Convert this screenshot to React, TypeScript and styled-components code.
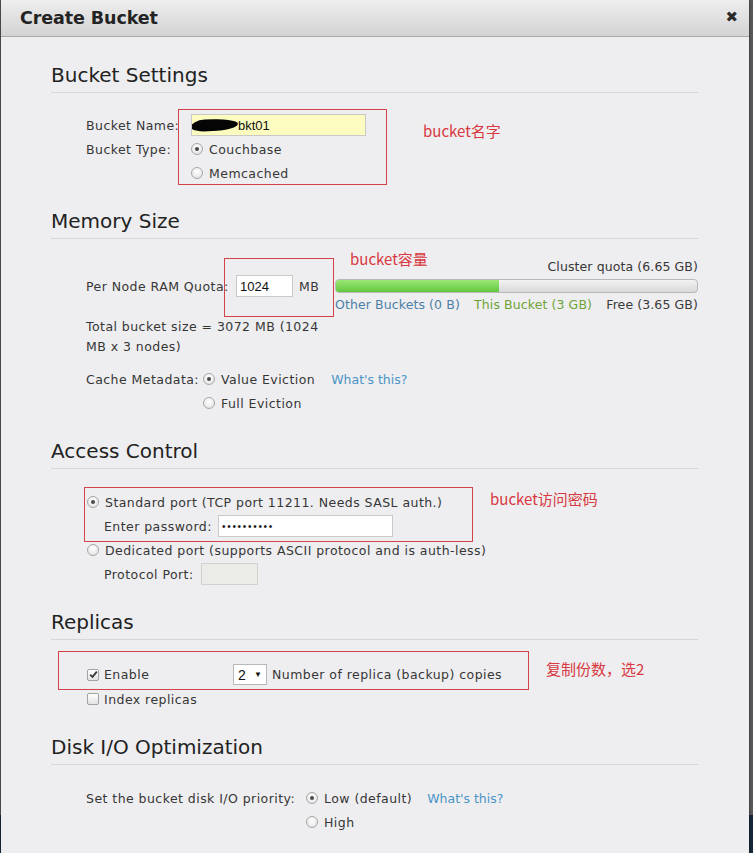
import React from "react";
import styled, { createGlobalStyle } from "styled-components";

const Global = createGlobalStyle`
  html, body { margin: 0; padding: 0; background: #565656; }
  body { font-family: "DejaVu Sans", Verdana, sans-serif; }
  * { box-sizing: border-box; }
`;

const Page = styled.div`
  width: 753px;
  height: 853px;
  overflow: hidden;
  display: flex;
  background: linear-gradient(to bottom, #5a5a5a 0, #5a5a5a 815px, #16293b 815px);
`;

const Dialog = styled.div`
  position: relative;
  margin-left: 1px;
  width: 748px;
  height: 853px;
  background: #eeeef0;
  box-shadow: 0 0 3px rgba(0, 0, 0, 0.5);
`;

const Header = styled.div`
  height: 37px;
  display: flex;
  align-items: center;
  justify-content: space-between;
  padding: 0 11px 1px 19px;
  background: linear-gradient(to bottom, #eeeeee, #d3d3d3);
  border-bottom: 1px solid #a9a9a9;
  border-radius: 4px 4px 0 0;
`;

const Title = styled.h1`
  margin: 0;
  font-family: "DejaVu Sans", Verdana, sans-serif;
  font-size: 17.5px;
  font-weight: bold;
  color: #242424;
  letter-spacing: -0.1px;
`;

const Close = styled.span`
  font-size: 15px;
  font-weight: bold;
  color: #2a2a2a;
  line-height: 1;
`;

const Body = styled.div`
  padding: 26px 51px 0 50px;
`;

const Section = styled.section`
  & + & {
    margin-top: 24px;
  }
`;

const Heading = styled.h2`
  margin: 0;
  font-size: 20px;
  font-weight: normal;
  line-height: 24px;
  color: #222;
  padding-bottom: 5px;
  border-bottom: 1px solid #d6d6d8;
`;

const Fields = styled.div<{ $top?: number }>`
  margin-top: ${(p) => (p.$top ?? 20)}px;
  padding-left: 35px;
  font-size: 12.5px;
  letter-spacing: 0.45px;
  color: #363636;
`;

const Row = styled.div<{ $indent?: number; $h?: number }>`
  display: flex;
  align-items: center;
  height: ${(p) => p.$h ?? 24}px;
  padding-left: ${(p) => p.$indent ?? 0}px;
  white-space: nowrap;
`;

const Label = styled.span<{ $w?: number }>`
  flex: none;
  width: ${(p) => (p.$w ? `${p.$w}px` : "auto")};
`;

const TextBox = styled.div<{ $w: number; $bg?: string; $disabled?: boolean }>`
  flex: none;
  width: ${(p) => p.$w}px;
  height: 22px;
  display: flex;
  align-items: center;
  padding-left: 3px;
  border: 1px solid ${(p) => (p.$disabled ? "#d2d2d0" : "#c9c9c9")};
  background: ${(p) => (p.$disabled ? "#ebebe7" : p.$bg ?? "#ffffff")};
  font-family: "Liberation Sans", Arial, sans-serif;
  font-size: 13px;
  letter-spacing: 0;
  color: #111;
  overflow: hidden;
`;

const Redaction = styled.span`
  display: inline-block;
  width: 47px;
  height: 12px;
  margin-left: -4px;
  background: #050505;
  border-radius: 30% 70% 55% 35% / 60% 50% 50% 40%;
  transform: rotate(-3deg);
`;

const Dots = styled.span`
  font-size: 10px;
  letter-spacing: 1.7px;
  color: #1a1a1a;
`;

const RadioDot = styled.span<{ $on?: boolean }>`
  flex: none;
  width: 12px;
  height: 12px;
  margin-right: 6px;
  border-radius: 50%;
  border: 1px solid #a7a7a7;
  background: radial-gradient(circle at 50% 35%, #ffffff 0, #dedede 100%);
  display: flex;
  align-items: center;
  justify-content: center;
  &::after {
    content: "";
    width: 4px;
    height: 4px;
    border-radius: 50%;
    background: ${(p) => (p.$on ? "#4a4a4a" : "transparent")};
  }
`;

const CheckBox = styled.span`
  flex: none;
  width: 12px;
  height: 12px;
  margin-right: 5px;
  border-radius: 2px;
  border: 1px solid #a2a2a2;
  background: linear-gradient(#ffffff, #e3e3e3);
  display: flex;
  align-items: center;
  justify-content: center;
`;

const Link = styled.span<{ $ml: number }>`
  margin-left: ${(p) => p.$ml}px;
  color: #4a94c7;
  letter-spacing: 0;
`;

const Unit = styled.span`
  margin-left: 6px;
`;

const MemoryRow = styled.div`
  display: flex;
  align-items: center;
`;

const MemoryLeft = styled.div`
  flex: none;
  width: 249px;
  display: flex;
  align-items: center;
`;

const Quota = styled.div`
  flex: 1;
  display: flex;
  flex-direction: column;
  letter-spacing: 0.1px;
`;

const QuotaTitle = styled.div`
  text-align: right;
  line-height: 16px;
`;

const Bar = styled.div`
  margin-top: 4px;
  height: 14px;
  border: 1px solid #b9b9b9;
  border-radius: 4px;
  background: linear-gradient(#f2f2f2, #d9d9d9);
  overflow: hidden;
  display: flex;
`;

const BarFill = styled.div`
  height: 100%;
  background: linear-gradient(#9be676, #62c83f);
`;

const Legend = styled.div`
  margin-top: 4px;
  display: flex;
  justify-content: space-between;
  line-height: 16px;
`;

const LegendItem = styled.span<{ $c: string }>`
  color: ${(p) => p.$c};
`;

const Para = styled.p`
  margin: 4px 0 0;
  width: 245px;
  line-height: 20px;
`;

const Select = styled.div`
  flex: none;
  width: 34px;
  height: 21px;
  margin-right: 5px;
  padding: 0 4px;
  display: flex;
  align-items: center;
  justify-content: space-between;
  background: #fff;
  border: 1px solid #b8b8b8;
  font-family: "Liberation Sans", Arial, sans-serif;
  font-size: 14px;
  color: #111;
  letter-spacing: 0;
`;

const Caret = styled.span`
  font-size: 8px;
  color: #111;
`;

const NoteBox = styled.div<{ $x: number; $y: number; $w: number; $h: number }>`
  position: absolute;
  left: ${(p) => p.$x}px;
  top: ${(p) => p.$y}px;
  width: ${(p) => p.$w}px;
  height: ${(p) => p.$h}px;
  border: 1px solid #d2434a;
  pointer-events: none;
`;

const NoteText = styled.div<{ $x: number; $y: number }>`
  position: absolute;
  left: ${(p) => p.$x}px;
  top: ${(p) => p.$y}px;
  font-family: "Noto Sans CJK SC", "Noto Sans", sans-serif;
  font-size: 15px;
  line-height: 18px;
  color: #d8383f;
  white-space: nowrap;
`;

const Check = () => (
  <svg width="9" height="9" viewBox="0 0 9 9">
    <path d="M1.2 4.6 L3.5 7 L7.8 1.6" fill="none" stroke="#333" strokeWidth="1.8" />
  </svg>
);

const Radio = ({ on, children }: { on?: boolean; children: React.ReactNode }) => (
  <>
    <RadioDot $on={on} />
    <span>{children}</span>
  </>
);

export default function App() {
  return (
    <Page>
      <Global />
      <Dialog>
        <Header>
          <Title>Create Bucket</Title>
          <Close>✖</Close>
        </Header>
        <Body>
          <Section>
            <Heading>Bucket Settings</Heading>
            <Fields>
              <Row>
                <Label $w={105}>Bucket Name:</Label>
                <TextBox $w={175} $bg="#fcfcc0">
                  <Redaction />
                  bkt01
                </TextBox>
              </Row>
              <Row>
                <Label $w={105}>Bucket Type:</Label>
                <Radio on>Couchbase</Radio>
              </Row>
              <Row $indent={105}>
                <Radio>Memcached</Radio>
              </Row>
            </Fields>
          </Section>

          <Section>
            <Heading>Memory Size</Heading>
            <Fields $top={20}>
              <MemoryRow>
                <MemoryLeft>
                  <Label $w={150}>Per Node RAM Quota:</Label>
                  <TextBox $w={57}>1024</TextBox>
                  <Unit>MB</Unit>
                </MemoryLeft>
                <Quota>
                  <QuotaTitle>Cluster quota (6.65 GB)</QuotaTitle>
                  <Bar>
                    <BarFill style={{ width: `${(3 / 6.65) * 100}%` }} />
                  </Bar>
                  <Legend>
                    <LegendItem $c="#4d7ea6">Other Buckets (0 B)</LegendItem>
                    <LegendItem $c="#6ea336">This Bucket (3 GB)</LegendItem>
                    <LegendItem $c="#3a3a3a">Free (3.65 GB)</LegendItem>
                  </Legend>
                </Quota>
              </MemoryRow>
              <Para>Total bucket size = 3072 MB (1024 MB x 3 nodes)</Para>
              <Row style={{ marginTop: 10 }}>
                <Label $w={117}>Cache Metadata:</Label>
                <Radio on>Value Eviction</Radio>
                <Link $ml={16}>What's this?</Link>
              </Row>
              <Row $indent={117}>
                <Radio>Full Eviction</Radio>
              </Row>
            </Fields>
          </Section>

          <Section>
            <Heading>Access Control</Heading>
            <Fields $top={21}>
              <Row $indent={1}>
                <Radio on>Standard port (TCP port 11211. Needs SASL auth.)</Radio>
              </Row>
              <Row $indent={18}>
                <Label $w={114}>Enter password:</Label>
                <TextBox $w={175}>
                  <Dots>••••••••••</Dots>
                </TextBox>
              </Row>
              <Row $indent={1}>
                <Radio>Dedicated port (supports ASCII protocol and is auth-less)</Radio>
              </Row>
              <Row $indent={18}>
                <Label $w={97}>Protocol Port:</Label>
                <TextBox $w={57} $disabled />
              </Row>
            </Fields>
          </Section>

          <Section>
            <Heading>Replicas</Heading>
            <Fields $top={22}>
              <Row $indent={1} $h={25}>
                <CheckBox>
                  <Check />
                </CheckBox>
                <Label $w={129}>Enable</Label>
                <Select>
                  2<Caret>▼</Caret>
                </Select>
                <span>Number of replica (backup) copies</span>
              </Row>
              <Row $indent={1}>
                <CheckBox />
                <span>Index replicas</span>
              </Row>
            </Fields>
          </Section>

          <Section>
            <Heading>Disk I/O Optimization</Heading>
            <Fields $top={21}>
              <Row>
                <Label $w={220}>Set the bucket disk I/O priority:</Label>
                <Radio on>Low (default)</Radio>
                <Link $ml={15}>What's this?</Link>
              </Row>
              <Row $indent={220}>
                <Radio>High</Radio>
              </Row>
            </Fields>
          </Section>
        </Body>

        <NoteBox $x={177} $y={109} $w={209} $h={76} />
        <NoteText $x={422} $y={122}>bucket名字</NoteText>
        <NoteBox $x={223} $y={258} $w={110} $h={59} />
        <NoteText $x={349} $y={250}>bucket容量</NoteText>
        <NoteBox $x={83} $y={487} $w={389} $h={55} />
        <NoteText $x={489} $y={490}>bucket访问密码</NoteText>
        <NoteBox $x={57} $y={651} $w={471} $h={39} />
        <NoteText $x={545} $y={660}>复制份数，选2</NoteText>
      </Dialog>
    </Page>
  );
}
